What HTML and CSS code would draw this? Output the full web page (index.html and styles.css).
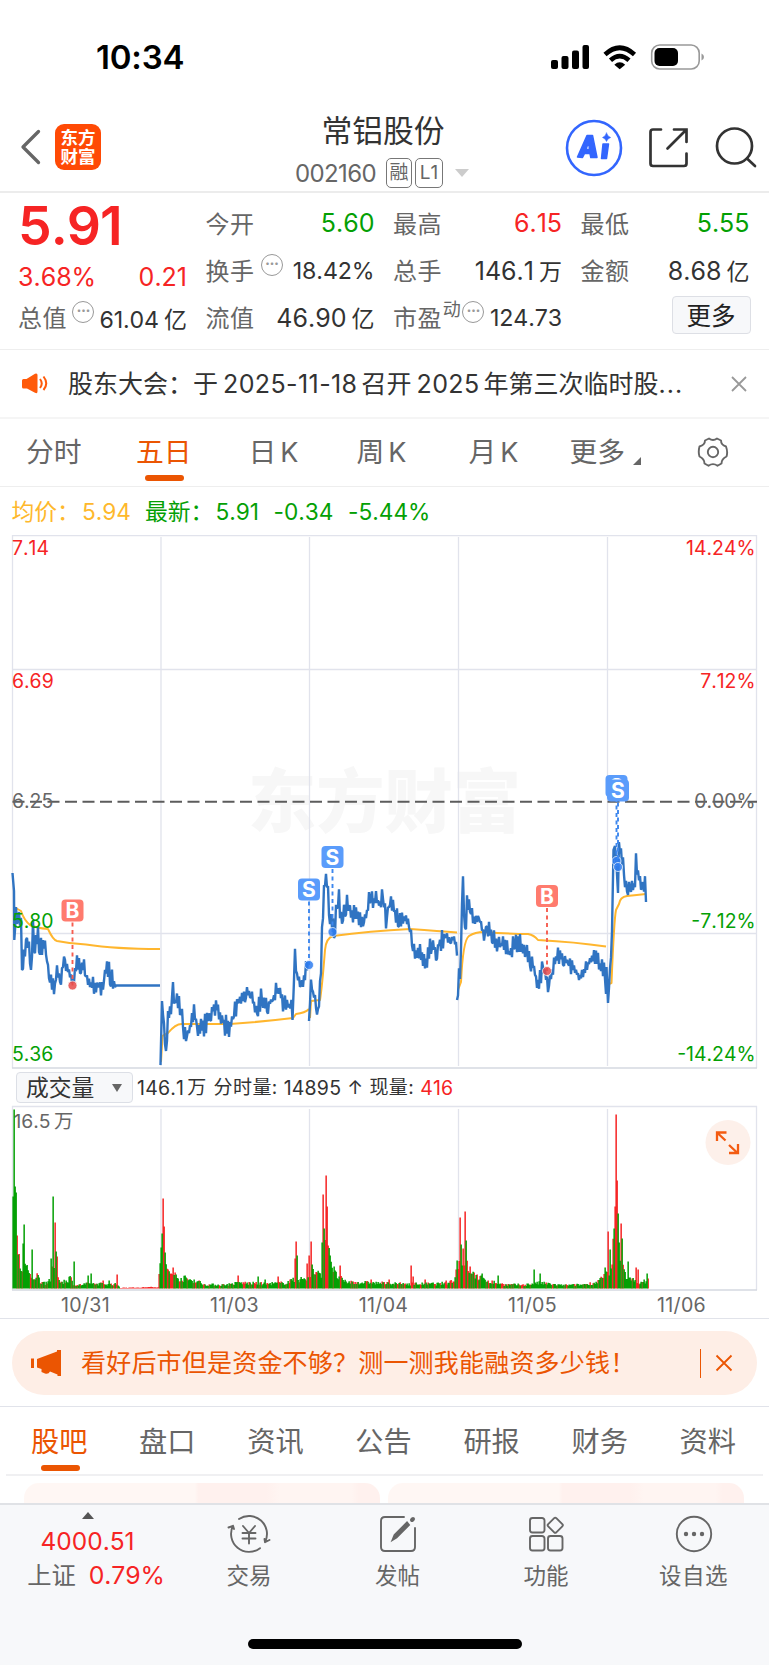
FILE: index.html
```html
<!DOCTYPE html>
<html lang="zh-CN">
<head>
<meta charset="utf-8">
<title>常铝股份 002160</title>
<link rel="stylesheet" href="styles.css">
</head>
<body>
<div class="screen">
  <header class="status">
    <span class="clock">10:34</span>
    <svg class="status-icons" width="160" height="30" viewBox="548 42 160 30">
      <rect x="551" y="60" width="7" height="9" rx="2"/><rect x="561.5" y="56" width="7" height="13" rx="2"/><rect x="572" y="50.5" width="7" height="18.500" rx="2"/><rect x="582.500" y="45" width="6.500" height="24" rx="2"/>
      <g fill="none" stroke="#000" stroke-width="4.600"><path d="M605 54.500Q619.700 41 634.500 54.500"/><path d="M610.500 60.300Q619.700 52 629 60.300"/></g>
      <path d="M614.300 64.700Q619.700 60 625.200 64.700L619.700 69.300Z"/>
      <rect x="651.700" y="45" width="47.500" height="24" rx="8" fill="none" stroke="#999" stroke-width="1.600"/>
      <rect x="654.500" y="48" width="23.500" height="18" rx="5"/>
      <path d="M701.500 53.500q2.500 1 2.500 3.500t-2.500 3.500z" fill="#999"/>
    </svg>
  </header>

  <nav class="head">
    <div class="head-left">
      <svg width="22" height="36" viewBox="0 0 22 36"><path d="M19.500 2.500L4 18L19.500 33.500" fill="none" stroke="#666" stroke-width="3.300" stroke-linecap="round" stroke-linejoin="round"/></svg>
      <div class="logo"><span>东方</span><span>财富</span></div>
    </div>
    <div class="head-mid">
      <h1>常铝股份</h1>
      <div class="code"><span class="num">002160</span><i class="tag">融</i><i class="tag l1">L1</i><b class="caret"></b></div>
    </div>
    <svg class="head-tools" width="202" height="60" viewBox="564 118 202 60" fill="none" stroke="#333" stroke-width="2.700" stroke-linecap="round">
      <circle cx="594" cy="148" r="27" stroke="#3366fe" stroke-width="2.600"/>
      <g fill="#3366fe" stroke="#3366fe" stroke-width="1.500" stroke-linejoin="round"><path fill-rule="evenodd" d="M577.500 157L587 135.500H592.500L597 157.500H590.800L590 153.500H584.500L582.500 157.500ZM586 149.500H589.500L588.500 142Z"/><path d="M603 144H608.500L606.500 158.500H601.500Z"/><path stroke-width=".5" d="M606.500 133Q607.500 136.500 610.700 137.500Q607.500 138.500 606.500 141.500Q605.500 138.500 602.500 137.500Q605.500 136.500 606.500 133Z"/></g>
      <path d="M661 129.500H653Q650.500 129.500 650.500 132V163.500Q650.500 166 653 166H684Q686.500 166 686.500 163.500V153.500M674 129.500H686.500V142M686 130L667.500 148.500"/>
      <circle cx="734.500" cy="146" r="17.500"/><path d="M747 158.500L755 166"/>
    </svg>
  </nav>

  <section class="quote">
    <div class="lead">
      <div class="price">5.91</div>
      <div class="cell r2 red"><span class="num">3.68%</span><span class="num">0.21</span></div>
      <div class="cell"><label>总值</label><i class="more-dot">···</i><span class="num s">61.04<u>亿</u></span></div>
    </div>
    <div class="col">
      <div class="cell"><label>今开</label><span class="num green">5.60</span></div>
      <div class="cell"><label>换手</label><i class="more-dot pull">···</i><span class="num s">18.42%</span></div>
      <div class="cell"><label>流值</label><span class="num">46.90<u>亿</u></span></div>
    </div>
    <div class="col">
      <div class="cell"><label>最高</label><span class="num red">6.15</span></div>
      <div class="cell"><label>总手</label><span class="num">146.1<u>万</u></span></div>
      <div class="cell"><label>市盈</label><sup>动</sup><i class="more-dot tight">···</i><span class="num s">124.73</span></div>
    </div>
    <div class="col">
      <div class="cell"><label>最低</label><span class="num green">5.55</span></div>
      <div class="cell"><label>金额</label><span class="num">8.68<u>亿</u></span></div>
      <div class="cell end"><button class="more-btn">更多</button></div>
    </div>
  </section>

  <section class="notice">
    <svg width="26" height="22" viewBox="0 0 26 22" fill="#ff5a0a"><path d="M0 7.500Q0 6 1.500 6H4.500L13 .7Q15.500-.3 15.500 2V18.500Q15.500 21 13 19.700L5 15.500H1.500Q0 15.500 0 14Z"/><path d="M18 6Q21.500 10.500 18 15M21.500 3.500Q27 10.500 21.500 17" fill="none" stroke="#ff5a0a" stroke-width="2"/></svg>
    <p>股东大会：<span>于</span><span class="n">2025-11-18</span>召开<span class="n">2025</span>年第三次临时股<span class="dots">...</span></p>
    <svg width="16" height="16" viewBox="0 0 16 16"><path d="M1 1L15 15M15 1L1 15" stroke="#999" stroke-width="1.800"/></svg>
  </section>

  <nav class="periods">
    <span>分时</span><span class="on">五日</span><span>日<em>K</em></span><span>周<em>K</em></span><span>月<em>K</em></span><span>更多<b class="corner"></b></span>
    <svg width="32" height="32" viewBox="-16 -16 32 32" fill="none" stroke="#666" stroke-width="1.900" stroke-linejoin="round"><circle r="5.200"/><path d="M-4-13.500Q0-10.500 4-13.500L8-11.500Q8-7 13-5.500Q15 0 13.500 4.500Q8.500 7 8.500 11.500L4.500 13.800Q0 10.500-4.500 13.800L-8.500 11.500Q-8.500 7-13.500 4.500Q-15 0-13.500-5.500Q-8-7-8-11.500Z"/></svg>
  </nav>

  <div class="legend"><span class="avg">均价：<i>5.94</i></span><span class="now">最新：<i>5.91</i><i>-0.34</i><i>-5.44%</i></span></div>

  <svg class="price-chart" width="769" height="534" viewBox="0 535 769 534">
    <g class="watermark"><text x="248" y="827" textLength="273" lengthAdjust="spacingAndGlyphs">东方财富</text></g>
    <g class="grid"><path d="M12 535.500H757M12.500 535V1068M756.500 535V1068M12 669.500H757M12 933.500H757M161 537V1066M309.500 537V1066M458.500 537V1066M607.500 537V1066"/><path d="M12 1068H757" class="base"/></g>
    <path class="mid" d="M12.500 801.700H757"/>
    <path id="avg" class="avg-line"/>
    <path id="price" class="price-line"/>
    <g class="axis">
      <text x="12" y="555" class="up">7.14</text><text x="12" y="688" class="up">6.69</text><text x="12" y="808">6.25</text><text x="12" y="928" class="down">5.80</text><text x="12" y="1061" class="down">5.36</text>
      <g text-anchor="end"><text x="755.500" y="555" class="up">14.24%</text><text x="755.500" y="688" class="up">7.12%</text><text x="755.500" y="808">0.00%</text><text x="755.500" y="928" class="down">-7.12%</text><text x="755.500" y="1061" class="down">-14.24%</text></g>
    </g>
    <g id="marks" class="marks"></g>
  </svg>

  <div class="vol-bar">
    <span class="select">成交量<b></b></span>
    <span class="vol-text"><i>146.1</i><span class="wan">万</span><span>分时量:</span><i>14895</i><span class="arrow">↑</span><span>现量:</span><i class="red">416</i></span>
  </div>

  <svg class="vol-chart" width="769" height="186" viewBox="0 1105 769 186">
    <g class="grid"><path d="M12 1106.500H757M12.500 1106V1290M756.500 1106V1290M161 1109V1289M309.500 1109V1289M458.500 1109V1289M607.500 1109V1289"/><path d="M12 1290H757" class="base"/></g>
    <text x="13.500" y="1128" class="vol-max">16.5</text><text x="54" y="1128" class="vol-max">万</text>
    <path id="vup" fill="#f62424"/><path id="vdown" fill="#04a004"/>
    <circle cx="728" cy="1142.500" r="22.500" fill="#fdf0ea"/>
    <path d="M717 1141V1132.500H726.500M717.500 1133L725.500 1140.500M729 1145L737 1152.500M729 1153H738V1144" fill="none" stroke="#f35b11" stroke-width="2.300"/>
  </svg>

  <div class="dates"><span>10/31</span><span>11/03</span><span>11/04</span><span>11/05</span><span>11/06</span></div>

  <div class="promo-wrap"><div class="promo">
    <svg width="30" height="26" viewBox="0 0 30 26" fill="#eb5502"><path d="M0 8.500H3V18H0ZM6 9L26 1.500V0H30V26H26.500V24.500L19 21.500Q17.500 24.500 14 23.500L10.500 22V19L6 17.500Z"/></svg>
    <p>看好后市但是资金不够？测一测我能融资多少钱！</p>
    <b></b>
    <svg width="18" height="18" viewBox="0 0 18 18"><path d="M1.500 1.500L16.500 16.500M16.500 1.500L1.500 16.500" stroke="#eb5502" stroke-width="1.800"/></svg>
  </div></div>

  <nav class="sections"><span class="on">股吧</span><span>盘口</span><span>资讯</span><span>公告</span><span>研报</span><span>财务</span><span>资料</span></nav>

  <div class="cards"><div></div><div></div></div>

  <footer class="dock">
    <div class="index"><b></b><span class="red">4000.51</span><p>上证<i class="red">0.79%</i></p></div>
    <div class="item">
      <svg width="44" height="38" viewBox="-22 -19 44 38" fill="none" stroke="#666" stroke-width="1.900" stroke-linecap="round" stroke-linejoin="round"><path d="M-10-15A18 18 0 0 1 16 8.200L20.500 6M16 8.200L15.500 5"/><path d="M11 14.200A18 18 0 0 1-16-8.200L-20.500-6.500M-16-8.200L-15-5"/><path d="M-6-8L0-1L6-8M0-1V9.500M-6.500-1H6.500M-6.500 4.500H6.500"/></svg>
      <span>交易</span></div>
    <div class="item">
      <svg width="38" height="38" viewBox="-19 -19 38 38" fill="none" stroke="#666" stroke-width="1.900" stroke-linecap="round"><path d="M6-17H-13Q-17-17-17-13V13Q-17 17-13 17H13Q17 17 17 13V-6"/><path d="M-5.500 6L-3.500 1L9-11.500L11-9L-1.500 3.500Z" fill="#666"/><path d="M14-14L15-15" stroke-width="4"/></svg>
      <span>发帖</span></div>
    <div class="item">
      <svg width="38" height="38" viewBox="-19 -19 38 38" fill="none" stroke="#666" stroke-width="1.900" stroke-linejoin="round"><rect x="-16" y="-16" width="14.500" height="14.500" rx="2.500"/><rect x="-16" y="2" width="14.500" height="14.500" rx="2.500"/><rect x="2" y="2" width="14.500" height="14.500" rx="2.500"/><rect x="3.500" y="-14.500" width="11.500" height="11.500" rx="1.500" transform="rotate(45 9.250 -8.750)"/></svg>
      <span>功能</span></div>
    <div class="item">
      <svg width="38" height="38" viewBox="-19 -19 38 38"><circle r="17.200" fill="none" stroke="#666" stroke-width="1.900"/><g fill="#666"><circle cx="-8" r="2.200"/><circle r="2.200"/><circle cx="8" r="2.200"/></g></svg>
      <span class="wide">设自选</span></div>
  </footer>
  <div class="home"><b></b></div>
</div>
<script src="chart.js"></script>
</body>
</html>
```
FILE: styles.css
```css
* { box-sizing: border-box; }
body { margin: 0; background: #fff; color: #333; font-family: Inter, "Noto Sans CJK SC", sans-serif; font-weight: 400; font-kerning: none; font-feature-settings: "calt" 0; }
i, em, u { font-style: normal; text-decoration: none; }
p, h1 { margin: 0; }
.screen { width: 769px; height: 1665px; overflow: hidden; display: flex; flex-direction: column; }
.screen > * { flex: none; }
.red { color: #f62424; }
.green { color: #04a004; }

.status { height: 110px; display: flex; justify-content: space-between; padding: 37px 61px 0 96px; }
.clock { font-size: 33px; line-height: 40px; font-weight: 600; color: #000; letter-spacing: -.2px; }
.status-icons { margin-top: 5px; }

.head { height: 83px; border-bottom: 2px solid #ececec; display: grid; grid-template-columns: 280px 208px 281px; align-items: start; }
.head-left { display: flex; align-items: center; gap: 14px; padding: 14px 0 0 19px; }
.logo { width: 46px; height: 46px; border-radius: 9px; background: #ff4a05; color: #fff; font-size: 17.500px; font-weight: 700; line-height: 19px; display: flex; flex-direction: column; align-items: center; justify-content: center; }
.head-mid { display: flex; flex-direction: column; align-items: center; }
.head-mid h1 { font-size: 30.800px; line-height: 42px; font-weight: 400; white-space: nowrap; margin-left: -2px; }
.code { display: flex; align-items: center; height: 36px; margin: 3px 0 0 0; width: 178px; }
.code .num { font-size: 24px; color: #666; width: 91px; letter-spacing: -.6px; }
.tag { width: 26px; height: 30px; border: 1.500px solid #777; border-radius: 5px; font-size: 19px; line-height: 27px; color: #666; text-align: center; margin-right: 3px; flex: none; }
.l1 { width: 28px; }
.caret { border: 7px solid transparent; border-top: 8px solid #ccc; border-bottom: 0; margin-left: 9px; }
.head-tools { margin: 8px 0 0 76px; }

.quote { height: 157px; border-bottom: 1px solid #eee; display: grid; grid-template-columns: repeat(4, 169px); column-gap: 18.500px; padding: 6px 0 0 18px; }
.price { height: 52px; font-size: 53.500px; line-height: 54px; font-weight: 600; color: #f62424; letter-spacing: -1px; }
.cell { height: 47px; display: flex; align-items: center; justify-content: space-between; font-size: 25px; white-space: nowrap; }
.lead .r2 { height: 44px; padding-top: 8px; margin-bottom: -2px; }
.cell label { color: #666; font-size: 24px; letter-spacing: .6px; }
.cell .num { letter-spacing: 0; }
.cell .s { font-size: 23.200px; letter-spacing: -.1px; padding-top: 2px; }
.cell u { font-size: 23px; padding-left: 5px; letter-spacing: 0; }
.cell sup { font-size: 18px; color: #666; align-self: flex-start; line-height: 18px; margin: 8px 0 0 -1px; }
.more-dot { width: 22px; height: 22px; border: 1.800px solid #999; border-radius: 50%; font-size: 15px; line-height: 18px; color: #999; text-align: center; font-weight: 700; margin: -9px 0 0 0; letter-spacing: -.5px; flex: none; }
.more-dot.pull { margin-right: 4px; }
.more-dot.tight { margin-right: 4px; }
.end { justify-content: flex-end; }
.more-btn { width: 79px; height: 38px; border: 1px solid #dddfe5; border-radius: 4px; background: #f7f8fa; color: #222; font: 400 24.500px "Noto Sans CJK SC", sans-serif; padding: 0; margin: -3px -1px 0 0; line-height: 30px; }

.notice { height: 69px; border-bottom: 2px solid #f5f5f5; display: flex; align-items: center; padding: 0 22px 0 22px; }
.notice p { flex: 1; margin-left: 20px; font-size: 25px; line-height: 40px; white-space: nowrap; }
.notice .n { padding: 0 4px 0 5px; font-size: 25px; letter-spacing: .4px; }
.dots { letter-spacing: 1px; }

.periods { height: 68px; border-bottom: 1px solid #eee; display: grid; grid-template-columns: 110px 112.500px 108px 112px 101px 127.500px 32px; padding: 13px 0 0 26px; font-size: 27.800px; line-height: 40px; color: #666; }
.periods > span { white-space: nowrap; position: relative; justify-self: start; }
.periods em { margin-left: 4px; font-size: 27px; }
.periods .on { color: #eb5502; }
.periods .on::after { content: ""; position: absolute; left: 9px; bottom: 5px; width: 39px; height: 6px; border-radius: 3px; background: #eb5502; }
.periods svg { margin-top: 4px; }
.corner { display: inline-block; border-left: 8px solid transparent; border-bottom: 8px solid #666; margin-left: 8px; vertical-align: -3px; }

.legend { height: 48px; padding: 8px 0 0 11.500px; font-size: 22.800px; line-height: 34px; display: flex; }
.legend i { font-size: 22.700px; letter-spacing: 0; }
.avg { color: #feb82c; width: 133.500px; }
.avg i { margin-left: 2px; }
.now { color: #04a004; }
.now i { margin-right: 14.500px; }
.now i:first-of-type { margin-left: 2px; }

.price-chart, .vol-chart { display: block; }
.watermark text { font: 900 69px "Noto Sans CJK SC", sans-serif; fill: #f7f7f7; }
.grid path { fill: none; stroke: #e1e3ec; stroke-width: 1.300; }
.grid .base { stroke: #d4d8e0; stroke-width: 1.500; }
.mid { stroke: #5c5c5c; stroke-width: 1.900; stroke-dasharray: 12 5.500; }
.price-line { fill: none; stroke: #3074c2; stroke-width: 2.400; stroke-linejoin: bevel; }
.avg-line { fill: none; stroke: #ffb62e; stroke-width: 2; stroke-linejoin: round; }
.axis text { font: 400 19.400px Inter, sans-serif; fill: #666; letter-spacing: 0; font-kerning: none; }
.axis .up { fill: #f62424; }
.axis .down { fill: #04a004; }
.marks text { font: 700 21px Inter, sans-serif; fill: #fff; text-anchor: middle; }

.vol-bar { height: 36px; display: flex; align-items: center; padding: 1px 0 0 16px; }
.select { width: 117px; height: 31px; background: #f7f8fa; border: 1px solid #dcdfe6; border-radius: 4px; font-size: 22.800px; line-height: 28px; color: #333; padding-left: 9px; display: flex; align-items: center; white-space: nowrap; }
.select b { border: 5px solid transparent; border-top: 8px solid #666; border-bottom: 0; margin-left: 18px; }
.vol-text { font-size: 19px; line-height: 30px; margin-left: 4px; white-space: nowrap; color: #333; display: flex; }
.vol-text i { font-size: 19.500px; letter-spacing: .2px; }
.vol-text > span { letter-spacing: .4px; margin-right: 6px; }
.vol-text .wan { margin: 0 7px 0 3px; }
.vol-text .arrow { margin: 0 6px 0 6px; }
.vol-max { font: 400 19.300px Inter, "Noto Sans CJK SC", sans-serif; fill: #666; font-kerning: none; }
.dates { height: 28px; border-bottom: 1px solid #e1e3ea; display: grid; grid-template-columns: repeat(5, 149px); padding-left: 11px; font-size: 19.600px; letter-spacing: .3px; line-height: 29px; color: #666; text-align: center; }

.promo-wrap { height: 88px; border-bottom: 1px solid #e1e3ea; padding: 12px; }
.promo { width: 745px; height: 64px; border-radius: 32px; background: #feeee6; color: #eb5502; display: flex; align-items: center; padding: 0 24px 0 19px; }
.promo p { font-size: 25px; line-height: 40px; margin-left: 20px; flex: 1; white-space: nowrap; letter-spacing: .2px; }
.promo b { width: 1.500px; height: 29px; background: #eb5502; margin-right: 14px; }

.sections { height: 69px; margin: 0 6px; border-bottom: 2px solid #f0f0f2; display: grid; grid-template-columns: repeat(7, 108.100px); padding: 14px 0 0 25px; font-size: 28.200px; line-height: 42px; color: #666; }
.sections span { justify-self: start; position: relative; white-space: nowrap; }
.sections .on { color: #eb5502; }
.sections .on::after { content: ""; position: absolute; left: 9.500px; bottom: 3px; width: 39px; height: 6px; border-radius: 3px; background: #eb5502; }
.cards { height: 27px; padding: 7px 0 0 24px; display: flex; gap: 8px; overflow: hidden; }
.cards div { width: 356px; height: 60px; border-radius: 15px; background: linear-gradient(90deg, #fff7f4 0, #fff7f4 48%, #fff1ee 49%, #fff1ee 68%, #fff5f2 72%, #fff5f2 92%, #fff1ee 94%); }

.dock { height: 118px; border-top: 2px solid #e0e2e6; background: #f7f8fa; display: grid; grid-template-columns: 175px 148px 149px 148px 148px; }
.index { text-align: center; font-size: 24px; line-height: 34px; display: flex; flex-direction: column; align-items: center; }
.index b { border: 6.500px solid transparent; border-bottom: 7px solid #555; border-top: 0; margin-top: 7px; }
.index span { margin-top: 5px; font-size: 24.500px; }
.index p { padding-left: 17px; font-size: 24.300px; color: #666; white-space: nowrap; }
.index i { margin-left: 13px; font-size: 24.800px; letter-spacing: -.1px; }
.item { display: flex; flex-direction: column; align-items: center; padding-top: 10px; font-size: 22.500px; line-height: 32px; color: #666; }
.item span { margin-top: 7px; }
.item .wide { letter-spacing: .5px; margin-left: -1px; }
.home { height: 44px; background: #f7f8fa; display: flex; justify-content: center; padding-top: 18px; }
.home b { width: 274px; height: 10px; border-radius: 5px; background: #000; }
```
FILE: chart.js
```js
let seed = 7;
const rnd = () => (seed = (seed * 16807) % 2147483647) / 2147483647;

// One list of "x,y" vertices per trading day.
const days = [
  "12.5,873 14,891 14.3,940 16,909 18,925 19,912 21,925 22,970 24,955 27,935 29,948 31,976 33,930 35,955 36,935 38,933 39,952 43,943 46,952 49,975 51,985 55,985 57,970 60,980 65,954 67,968 73,982 77,965 80,968 85,965 87,982 91,985 98,984 103,984 107,963 110,975 115,985.5",
  "160.500,1065 162,1001 164,1025 166,1053 168,1015 171,1005 173,985 175,1003 177,995 180,1005 183,1025 186,1035 190,1030 194,1011 197,1025 203,1030 210,1013 216,1005 220,1015 228,1030 233,1015 238,1000 245,995 250,993 257,1012 262,995 267,1005 272,1000 278,990 283,1000 287,1003 292.500,1009 295,959 297,975 300,985 304,980 308,965",
  "309,1021 311,981 313,995 316,998 318,1016 320,990 322,935 324,890 326,877 328,890 329,915 333,925 334,938 337,905 339,900 342,922 345,910 348,903 352,912 358,915 363,920 367,915 370,895 374,900 380,903 383,897 386,922 389,902 393,907 398,922 404,918 409,925 412,940 416,952 420,950 426,962 431,945 436,950 440,942 445,935 450,940 454,938 457,952",
  "457,1000 459,975 460,979 463,871 465,935 467,902 470,910 474,920 479,917 484,935 487,925 492,940 497,940 501,945 505,942 509,955 514,943 520,945 525,948 530,962 534,968 538,988 543,965 548,985 554,965 558,952 563,960 568,962 574,968 580,978 586,970 590,960 594,955 600,965 605,968 606,994",
  "606.500,967 608,1003 610,970 612,940 613.500,850 615,846 616.500,865 618,893 619,842 621,850 624,870 627,890 630,884 634,890 636,862 638,875 641,885 645,882 646,902"
];
let d = "";
days.forEach((s, k) => {
  const p = s.split(" ").map(q => q.split(",").map(Number));
  d += `M${p[0]}`;
  for (let i = 1; i < p.length; i++) {
    const [x0, y0] = p[i - 1], [x1, y1] = p[i];
    const n = Math.max(1, Math.round((x1 - x0) / 1.05));
    for (let j = 1; j <= n; j++) {
      const t = j / n, amp = n === 1 ? 0 : 10;
      const side = j % 2 ? 1 : -1, r = rnd();
      d += `L${(x0 + (x1 - x0) * t).toFixed(1)},${(y0 + (y1 - y0) * t + side * (.15 + r * r) * amp).toFixed(1)}`;
    }
  }
  if (k === 0) d += "L116,985.5H160";
});
document.getElementById("price").setAttribute("d", d);

document.getElementById("avg").setAttribute("d",
  "M14,907L21,911Q24,920 30,925Q36,928 48,929Q53,940 57,941Q72,944 86,944.500Q115,949 160,949" +
  "M161,1062L162.500,1036L168,1033Q176,1023 183,1024H230Q260,1022 293,1018L296,1014Q305,1013 309,1009" +
  "M310,1018L311,1001L320,1000Q322,988 325,950Q326,938 333,936Q370,931 410,929Q440,931 457,932.500" +
  "M458,990L461,982Q463,940 469,936Q475,932 484,932Q510,934 528,934Q534,935 538,940Q575,942 606,946.500" +
  "M609,984L611.500,983Q614,920 616,910L619,904Q620,897 627,896Q637,895 646,894");

// Markers: letter, x, badge centre y, dot y
const marks = [["B",72.500,910.500,985.500],["S",309,889.500,965],["S",332.500,857,932],["B",547,896,971],["S",616.500,786,861],["S",618,790.500,867]];
document.getElementById("marks").innerHTML = marks.map(([t, x, y, e]) => {
  const c = t === "B" ? "#ff7b6e" : "#5a9cfb", l = t === "B" ? "#f65d50" : "#3d87ee";
  return `<path d="M${x},${y + 12}V${e}" stroke="${l}" stroke-width="1.900" stroke-dasharray="4 3.500"/>` +
    `<circle cx="${x}" cy="${e}" r="4.500" fill="${t === "B" ? "#e64b4b" : "#2e7cf0"}" fill-opacity=".85" stroke="#fff" stroke-opacity=".7"/>` +
    `<rect x="${x - 11}" y="${y - 11}" width="22" height="22" rx="4" fill="${c}"/><text x="${x}" y="${y + 7.600}">${t}</text>`;
}).join("");

// Background volume level as x,height anchors; prominent single bars listed apart.
const level = [[13,90],[16,85],[18,35],[21,20],[25,26],[28,16],[33,12],[37,14],[40,8],[45,6],[50,10],[53,26],[57,22],[60,7],[66,8],[70,12],[74,3],[88,5],[92,5],[110,5],[118,4],[120,.8],[158,1.500],[162,48],[166,22],[172,15],[180,11],[187,10],[197,8],[205,4],[225,4],[240,6],[265,5],[285,6],[294,9],[299,10],[306,10],[312,20],[317,14],[321,18],[324,80],[327,70],[330,34],[335,15],[345,7],[370,6],[400,5],[440,5],[453,8],[458,25],[462,32],[465,35],[467,26],[472,15],[481,11],[492,7],[505,4],[525,4],[540,6],[560,3.500],[580,4],[595,6],[605,13],[611,18],[615,70],[618,65],[620,40],[624,18],[629,10],[635,8],[640,5],[647,9]];
const spikes = "13,92,g 14,179,g 15,102,g 16,96,g 23,45,g 24,64,g 32,39,g 51,30,g 53,92,g 55,66,r 56,37,g 57,32,r 74,27,g 88,13,g 91,15,g 103,8,r 109,8,g 117,14,r 162,55,g 163,90,r 164,62,r 165,36,g 173,21,r 175,16,r 185,13,g 238,13,r 258,12,g 265,9,g 278,12,r 290,9,r 295,30,r 296,47,r 297,33,g 307,25,r 309,33,r 311,47,r 312,24,g 323,94,r 324,60,g 326,113,r 327,82,r 328,43,r 330,33,g 340,23,r 371,9,r 389,9,r 411,23,r 413,12,r 425,9,r 456,19,r 457,28,g 460,71,r 461,44,g 463,40,r 465,77,r 466,48,g 474,16,r 482,15,g 498,13,g 534,19,g 540,15,g 605,21,g 608,57,r 610,39,g 612,24,r 614,60,g 615,82,r 616,174,r 617,108,r 618,75,g 621,65,r 622,50,g 628,27,g 636,21,r 638,19,r 647,15,g"
  .split(" ").map(s => s.split(","));
const bars = new Map();
for (let x = 13; x <= 648; x++) {
  let i = 0;
  while (i < level.length - 2 && level[i + 1][0] < x) i++;
  const [xa, ha] = level[i], [xb, hb] = level[i + 1];
  const h = Math.max(.5, (ha + (hb - ha) * Math.min(1, Math.max(0, (x - xa) / (xb - xa)))) * (.6 + rnd() * .65));
  const flat = x > 119 && x < 160;
  const warm = x > 322 && x < 329;
  bars.set(x, [h, flat || warm || rnd() < .3 ? "r" : "g"]);
}
spikes.forEach(([x, h, c]) => bars.set(+x, [+h, c]));
const out = { r: "", g: "" };
bars.forEach(([h, c], x) => out[c] += `M${x - .6},1288.5v${-h.toFixed(1)}h1.5v${h.toFixed(1)}z`);
document.getElementById("vup").setAttribute("d", out.r);
document.getElementById("vdown").setAttribute("d", out.g);
```
